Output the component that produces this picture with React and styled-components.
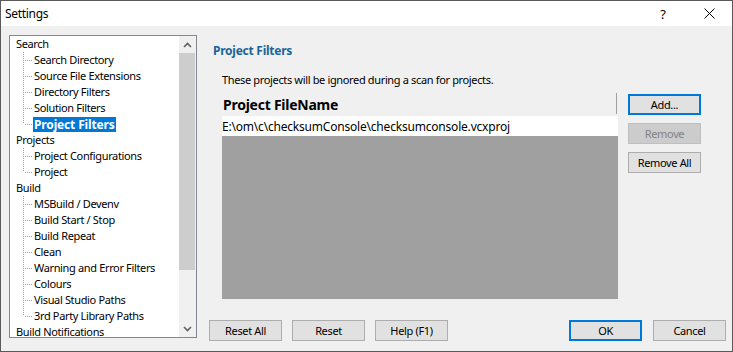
import React from "react";
import styled, { createGlobalStyle } from "styled-components";

const Global = createGlobalStyle`
  html, body { margin: 0; padding: 0; background: #fff; }
  * { box-sizing: border-box; }
`;

const FONT = `"Noto Sans", "Open Sans", "Liberation Sans", sans-serif`;

const Window = styled.div`
  width: 733px;
  height: 352px;
  border: 1px solid #5a5a5a;
  background: #f0f0f0;
  display: flex;
  flex-direction: column;
  font-family: ${FONT};
  font-size: 11px;
  letter-spacing: -0.35px;
  color: #000;
  overflow: hidden;
`;

const TitleBar = styled.div`
  height: 25px;
  flex: none;
  background: #fff;
  display: flex;
  align-items: center;
  padding-left: 4px;
`;

const TitleText = styled.div`
  flex: 1;
  font-size: 12px;
  letter-spacing: -0.3px;
  line-height: 16px;
`;

const TitleButton = styled.div`
  width: 46px;
  height: 25px;
  display: flex;
  align-items: center;
  justify-content: center;
  font-size: 13px;
  letter-spacing: 0;
`;

const Body = styled.div`
  flex: 1;
  display: flex;
  padding: 9px 6px 10px 8px;
  gap: 12px;
`;

const TreeBox = styled.div`
  width: 188px;
  height: 303px;
  flex: none;
  border: 1px solid #828790;
  background: #fff;
  display: flex;
  overflow: hidden;
`;

const TreeList = styled.div`
  flex: 1;
  overflow: hidden;
  position: relative;
`;

const Row = styled.div`
  height: 16px;
  padding-bottom: 2px;
  display: flex;
  align-items: center;
  position: relative;
  padding-left: ${(p) => (p.$child ? 23 : 5)}px;
  white-space: nowrap;
  line-height: 14px;
`;

const Label = styled.span`
  padding: 0 1px;
  line-height: 15px;
  margin-top: ${(p) => (p.$selected ? 2 : 0)}px;
  background: ${(p) => (p.$selected ? "#0078d7" : "transparent")};
  color: ${(p) => (p.$selected ? "#fff" : "#000")};
  font-weight: ${(p) => (p.$selected ? 700 : 400)};
  font-size: ${(p) => (p.$selected ? 12 : 11)}px;
  letter-spacing: ${(p) => (p.$selected ? -0.15 : -0.35)}px;
`;

const VLine = styled.span`
  position: absolute;
  left: 13px;
  top: 0;
  width: 1px;
  height: ${(p) => (p.$last ? 8 : 16)}px;
  background-image: linear-gradient(to bottom, #a0a0a0 50%, transparent 50%);
  background-size: 1px 2px;
`;

const HLine = styled.span`
  position: absolute;
  left: 14px;
  top: 8px;
  width: 9px;
  height: 1px;
  background-image: linear-gradient(to right, #a0a0a0 50%, transparent 50%);
  background-size: 2px 1px;
  background-position: 1px 0;
`;

const ScrollBar = styled.div`
  width: 17px;
  flex: none;
  background: #f0f0f0;
  display: flex;
  flex-direction: column;
`;

const ScrollArrow = styled.div`
  height: 17px;
  display: flex;
  align-items: center;
  justify-content: center;
`;

const ScrollTrack = styled.div`
  flex: 1;
  padding: 0 1px 0 0;
`;

const Thumb = styled.div`
  height: 217px;
  background: #cdcdcd;
`;

const Main = styled.div`
  flex: 1;
  display: flex;
  flex-direction: column;
`;

const Heading = styled.div`
  margin-top: 8px;
  padding-left: 4px;
  font-size: 12px;
  font-weight: 700;
  letter-spacing: -0.25px;
  color: #1a649a;
  line-height: 16px;
`;

const Content = styled.div`
  padding-left: 13px;
  display: flex;
  flex-direction: column;
`;

const Description = styled.div`
  margin-top: 13px;
  line-height: 16px;
`;

const TableRow = styled.div`
  margin-top: 5px;
  display: flex;
  gap: 10px;
  align-items: flex-start;
`;

const Grid = styled.div`
  width: 396px;
  height: 206px;
  display: flex;
  flex-direction: column;
  background: #a0a0a0;
`;

const GridHeader = styled.div`
  height: 23px;
  background: #f0f0f0;
  display: flex;
  align-items: center;
  padding-left: 1px;
  font-size: 14px;
  font-weight: 700;
  letter-spacing: -0.25px;
  position: relative;
`;

const HeaderSep = styled.span`
  position: absolute;
  right: 1px;
  top: 0;
  width: 1px;
  height: 21px;
  background: #a0a0a0;
`;

const GridCell = styled.div`
  height: 20px;
  background: #fff;
  display: flex;
  align-items: center;
  white-space: nowrap;
  font-size: 12px;
  letter-spacing: -0.2px;
`;

const SideButtons = styled.div`
  margin-top: 1px;
  display: flex;
  flex-direction: column;
  gap: 8px;
`;

const Button = styled.button`
  width: 73px;
  height: 21px;
  padding: 0;
  font-family: ${FONT};
  font-size: 11px;
  letter-spacing: -0.35px;
  line-height: 14px;
  background: ${(p) => (p.disabled ? "#cccccc" : "#e1e1e1")};
  color: ${(p) => (p.disabled ? "#838383" : "#000")};
  border: ${(p) =>
    p.$focus ? "2px solid #0078d7" : p.disabled ? "1px solid #bfbfbf" : "1px solid #adadad"};
  border-radius: 0;
  cursor: default;
`;

const Footer = styled.div`
  margin-top: auto;
  display: flex;
  align-items: center;
`;

const FooterGroup = styled.div`
  display: flex;
  gap: ${(p) => p.$gap}px;
  margin-left: ${(p) => (p.$right ? "auto" : "0")};
`;

const tree = [
  {
    label: "Search",
    children: [
      "Search Directory",
      "Source File Extensions",
      "Directory Filters",
      "Solution Filters",
      "Project Filters",
    ],
  },
  { label: "Projects", children: ["Project Configurations", "Project"] },
  {
    label: "Build",
    children: [
      "MSBuild / Devenv",
      "Build Start / Stop",
      "Build Repeat",
      "Clean",
      "Warning and Error Filters",
      "Colours",
      "Visual Studio Paths",
      "3rd Party Library Paths",
    ],
  },
  { label: "Build Notifications", children: [] },
];

const Chevron = ({ up }) => (
  <svg width="9" height="6" viewBox="0 0 9 6">
    <polyline
      points={up ? "1,5 4.5,1.5 8,5" : "1,1 4.5,4.5 8,1"}
      fill="none"
      stroke="#606060"
      strokeWidth="1.6"
    />
  </svg>
);

export default function App() {
  return (
    <>
      <Global />
      <Window>
        <TitleBar>
          <TitleText>Settings</TitleText>
          <TitleButton>?</TitleButton>
          <TitleButton>
            <svg width="11" height="11" viewBox="0 0 11 11">
              <path d="M0.5 0.5 L10.5 10.5 M10.5 0.5 L0.5 10.5" stroke="#000" strokeWidth="1" />
            </svg>
          </TitleButton>
        </TitleBar>
        <Body>
          <TreeBox>
            <TreeList>
              {tree.map((g) => (
                <React.Fragment key={g.label}>
                  <Row>
                    <Label>{g.label}</Label>
                  </Row>
                  {g.children.map((c, i) => (
                    <Row $child key={c}>
                      <VLine $last={i === g.children.length - 1} />
                      <HLine />
                      <Label $selected={c === "Project Filters"}>{c}</Label>
                    </Row>
                  ))}
                </React.Fragment>
              ))}
            </TreeList>
            <ScrollBar>
              <ScrollArrow>
                <Chevron up />
              </ScrollArrow>
              <ScrollTrack>
                <Thumb />
              </ScrollTrack>
              <ScrollArrow>
                <Chevron />
              </ScrollArrow>
            </ScrollBar>
          </TreeBox>
          <Main>
            <Heading>Project Filters</Heading>
            <Content>
              <Description>These projects will be ignored during a scan for projects.</Description>
              <TableRow>
                <Grid>
                  <GridHeader>
                    Project FileName
                    <HeaderSep />
                  </GridHeader>
                  <GridCell>E:\om\c\checksumConsole\checksumconsole.vcxproj</GridCell>
                </Grid>
                <SideButtons>
                  <Button $focus>Add...</Button>
                  <Button disabled>Remove</Button>
                  <Button>Remove All</Button>
                </SideButtons>
              </TableRow>
            </Content>
            <Footer>
              <FooterGroup $gap={10}>
                <Button>Reset All</Button>
                <Button>Reset</Button>
                <Button>Help (F1)</Button>
              </FooterGroup>
              <FooterGroup $right $gap={11}>
                <Button $focus>OK</Button>
                <Button>Cancel</Button>
              </FooterGroup>
            </Footer>
          </Main>
        </Body>
      </Window>
    </>
  );
}
